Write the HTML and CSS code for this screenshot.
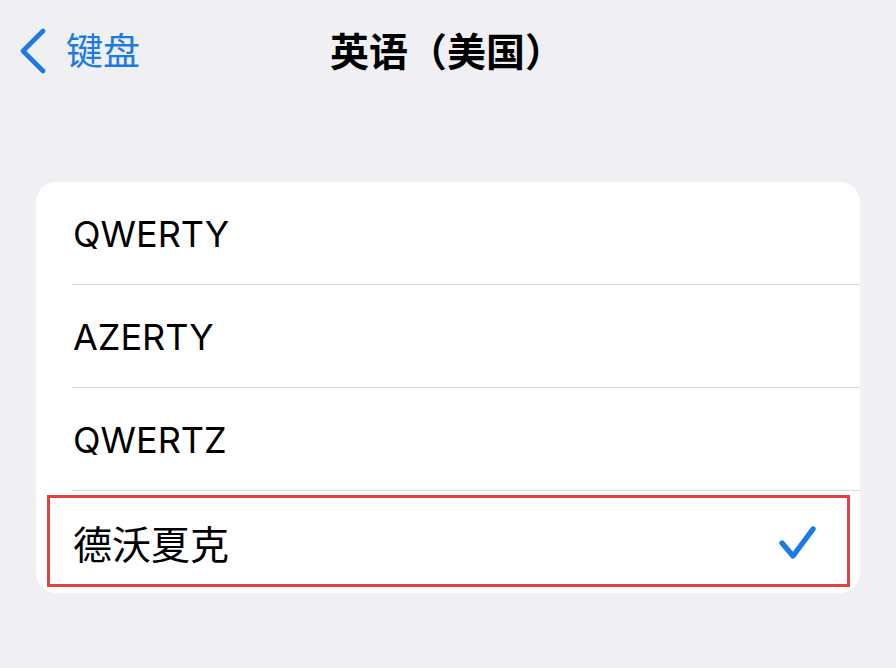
FILE: index.html
```html
<!DOCTYPE html>
<html lang="zh-CN">
<head>
<meta charset="utf-8">
<title>英语（美国）</title>
<link rel="stylesheet" href="styles.css">
</head>
<body>
<header class="nav">
  <div class="back">
    <svg class="chevron" width="30" height="46" viewBox="0 0 30 46" aria-hidden="true">
      <polyline points="25,3 5,23 25,43" fill="none" stroke="#1b7be6" stroke-width="4.6" stroke-linecap="round" stroke-linejoin="round"/>
    </svg>
    <span class="back-label">键盘</span>
  </div>
  <h1 class="title">英语（美国）</h1>
  <div class="spacer"></div>
</header>
<main>
  <ul class="list">
    <li class="row"><div class="row-inner"><span class="label">QWERTY</span></div></li>
    <li class="row"><div class="row-inner"><span class="label">AZERTY</span></div></li>
    <li class="row"><div class="row-inner"><span class="label">QWERTZ</span></div></li>
    <li class="row selected">
      <div class="row-inner">
        <span class="label cjk">德沃夏克</span>
        <svg class="check" width="44" height="36" viewBox="0 0 44 36" aria-hidden="true">
          <polyline points="6,19 17,32 37,5" fill="none" stroke="#1b7be6" stroke-width="5.4" stroke-linecap="round" stroke-linejoin="round"/>
        </svg>
      </div>
      <div class="highlight"></div>
    </li>
  </ul>
</main>
</body>
</html>
```

FILE: styles.css
```css
* {
  box-sizing: border-box;
}

html, body {
  margin: 0;
  padding: 0;
}

body {
  width: 896px;
  height: 668px;
  overflow: hidden;
  background: #efeff4;
  font-family: "Inter", "Liberation Sans", "Noto Sans CJK SC", sans-serif;
  color: #000;
}

.nav {
  height: 104px;
  padding-bottom: 6px;
  display: grid;
  grid-template-columns: 1fr auto 1fr;
  align-items: center;
}

.back {
  display: flex;
  align-items: center;
  padding-left: 18px;
}

.chevron {
  display: block;
  margin-top: 4px;
}

.back-label {
  margin-left: 18px;
  font-family: "Noto Sans CJK SC", sans-serif;
  font-size: 37px;
  line-height: 1;
  color: #1b7be6;
}

.title {
  margin: 0 2px 0 0;
  font-family: "Noto Sans CJK SC", sans-serif;
  font-size: 39px;
  font-weight: 700;
  line-height: 1;
  color: #000;
}

.list {
  list-style: none;
  margin: 78px 36px 0 36px;
  padding: 0;
  background: #fff;
  border-radius: 20px;
  overflow: hidden;
}

.row {
  position: relative;
  padding-left: 36px;
}

.row-inner {
  height: 103px;
  display: flex;
  align-items: center;
  justify-content: space-between;
  padding-left: 1px;
  padding-right: 40px;
  border-bottom: 1px solid #d9d9dd;
}

.row:last-child .row-inner {
  border-bottom: none;
  height: 102px;
}

.label {
  font-size: 36px;
  line-height: 1;
  padding-top: 2px;
}

.label.cjk {
  font-family: "Noto Sans CJK SC", sans-serif;
  font-size: 39px;
  padding-top: 0;
}

.check {
  display: block;
}

.highlight {
  position: absolute;
  top: 4px;
  bottom: 6px;
  left: 11px;
  right: 10px;
  border: 3px solid #e5403f;
  pointer-events: none;
}
```
